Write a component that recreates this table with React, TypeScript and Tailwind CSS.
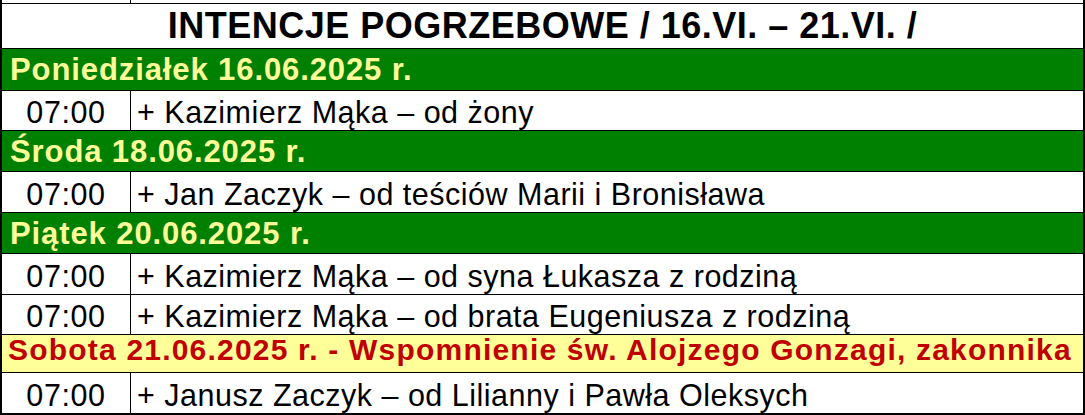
const rows: { kind: "day" | "mass" | "feast"; time?: string; text: string; h: string }[] = [
  { kind: "day", text: "Poniedziałek 16.06.2025 r.", h: "h-[42px]" },
  { kind: "mass", time: "07:00", text: "+ Kazimierz Mąka – od żony", h: "h-[40px]" },
  { kind: "day", text: "Środa 18.06.2025 r.", h: "h-[41px]" },
  { kind: "mass", time: "07:00", text: "+ Jan Zaczyk – od teściów Marii i Bronisława", h: "h-[41px]" },
  { kind: "day", text: "Piątek 20.06.2025 r.", h: "h-[41px]" },
  { kind: "mass", time: "07:00", text: "+ Kazimierz Mąka – od syna Łukasza z rodziną", h: "h-[41px]" },
  { kind: "mass", time: "07:00", text: "+ Kazimierz Mąka – od brata Eugeniusza z rodziną", h: "h-[40px]" },
  {
    kind: "feast",
    text: "Sobota 21.06.2025 r. - Wspomnienie św. Alojzego Gonzagi, zakonnika",
    h: "h-[38px]",
  },
  { kind: "mass", time: "07:00", text: "+ Janusz Zaczyk – od Lilianny i Pawła Oleksych", h: "h-[41px]" },
];

export default function App() {
  return (
    <div
      className="w-[1085px] h-[415px] bg-white overflow-hidden"
      style={{ fontFamily: '"Liberation Sans", Arial, sans-serif' }}
    >
      <div className="border-x-2 border-b-2 border-black">
        {/* tail of the previous table row */}
        <div className="flex h-[3px]">
          <div className="w-[129px] border-r border-black" />
          <div className="flex-1" />
        </div>

        <div className="flex h-[45px] items-center justify-center border-t border-black">
          <h1 className="text-[36px] font-bold leading-none tracking-[0.5px] text-black">
            INTENCJE POGRZEBOWE / 16.VI. – 21.VI. /
          </h1>
        </div>

        {rows.map((r, i) => {
          if (r.kind === "day") {
            return (
              <div
                key={i}
                className={`flex ${r.h} items-center border-t border-black bg-[#008000] pl-[8px]`}
              >
                <span className="text-[31px] font-bold leading-none tracking-[0.9px] text-[#ffff99]">
                  {r.text}
                </span>
              </div>
            );
          }
          if (r.kind === "feast") {
            return (
              <div
                key={i}
                className={`flex ${r.h} items-center border-t border-black bg-[#ffff99] pb-[7px] pl-[6px]`}
              >
                <span className="text-[30px] font-bold leading-none tracking-[1.2px] text-[#c00000]">
                  {r.text}
                </span>
              </div>
            );
          }
          return (
            <div key={i} className={`flex ${r.h} border-t border-black`}>
              <div className="flex w-[129px] items-center justify-center border-r border-black pt-[4px]">
                <span className="text-[30.5px] leading-none tracking-[0.6px] text-black">{r.time}</span>
              </div>
              <div className="flex flex-1 items-center pt-[4px] pl-[6px]">
                <span className="text-[30.5px] leading-none tracking-[0.5px] text-black">{r.text}</span>
              </div>
            </div>
          );
        })}
      </div>
    </div>
  );
}
